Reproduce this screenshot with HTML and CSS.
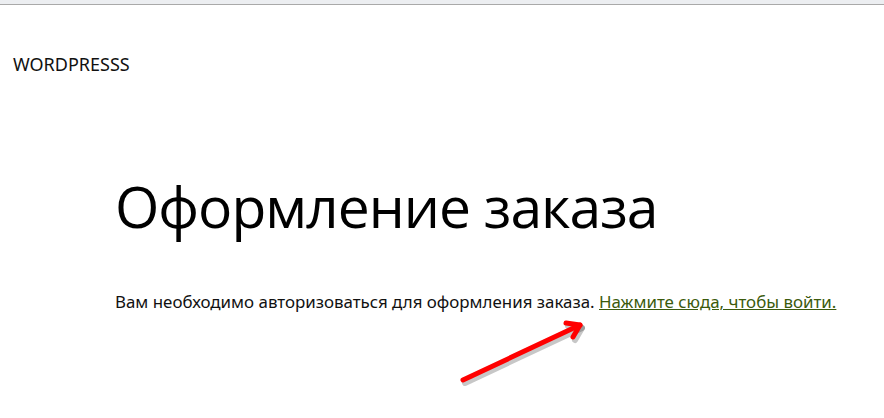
FILE: index.html
```html
<!DOCTYPE html>
<html lang="ru">
<head>
    <meta charset="UTF-8">
    <meta name="viewport" content="width=device-width, initial-scale=1.0">
    <title>Оформление заказа</title>
    <link rel="stylesheet" href="styles.css">
</head>
<body>
    <div class="topbar"></div>
    <header class="site-header">
        <a class="site-title" href="#">WORDPRESSS</a>
    </header>
    <main class="content">
        <h1 class="page-title">Оформление заказа</h1>
        <p class="notice">Вам необходимо авторизоваться для оформления заказа. <a href="#" class="login-link">Нажмите сюда, чтобы войти.</a></p>
        <!-- стрелка под ссылкой -->
        <div class="arrow">
            <svg width="140" height="80" viewBox="0 0 140 80">
                <g stroke="#000" stroke-opacity="0.22" stroke-width="6" stroke-linecap="round" stroke-linejoin="round" fill="none" transform="translate(2 3)">
                    <path d="M8 65 L125 10"/>
                    <path d="M111 8 L125 10 L118 22"/>
                </g>
                <g stroke="#ff0000" stroke-width="5" stroke-linecap="round" stroke-linejoin="round" fill="none">
                    <path d="M8 65 L125 10"/>
                    <path d="M111 8 L125 10 L118 22"/>
                </g>
            </svg>
        </div>
    </main>
</body>
</html>
```

FILE: styles.css
```css
*{
    margin: 0;
    padding: 0;
}

body{
    background: #fff;
    color: #111;
    font-family: "Noto Sans", "Open Sans", sans-serif;
}

.topbar{
    height: 4px;
    background: #eceef1;
    border-bottom: 1px solid #a9a9a9;
}

.site-header{
    padding: 47px 13px 0;
}

.site-title{
    display: block;
    color: #111;
    text-decoration: none;
    font-size: 18px;
    line-height: 24px;
}

.content{
    padding: 96px 0 0 115px;
}

.page-title{
    font-family: "Open Sans", "Noto Sans", sans-serif;
    font-weight: 400;
    font-size: 57px;
    line-height: 68px;
    letter-spacing: -1px;
    color: #000;
}

.notice{
    margin-top: 50px;
    font-size: 16.9px;
    line-height: 24px;
}

.login-link{
    color: #3b5a0c;
}

.arrow{
    margin: 1px 0 0 340px;
    width: 140px;
    height: 80px;
}

.arrow svg{
    display: block;
}
```
